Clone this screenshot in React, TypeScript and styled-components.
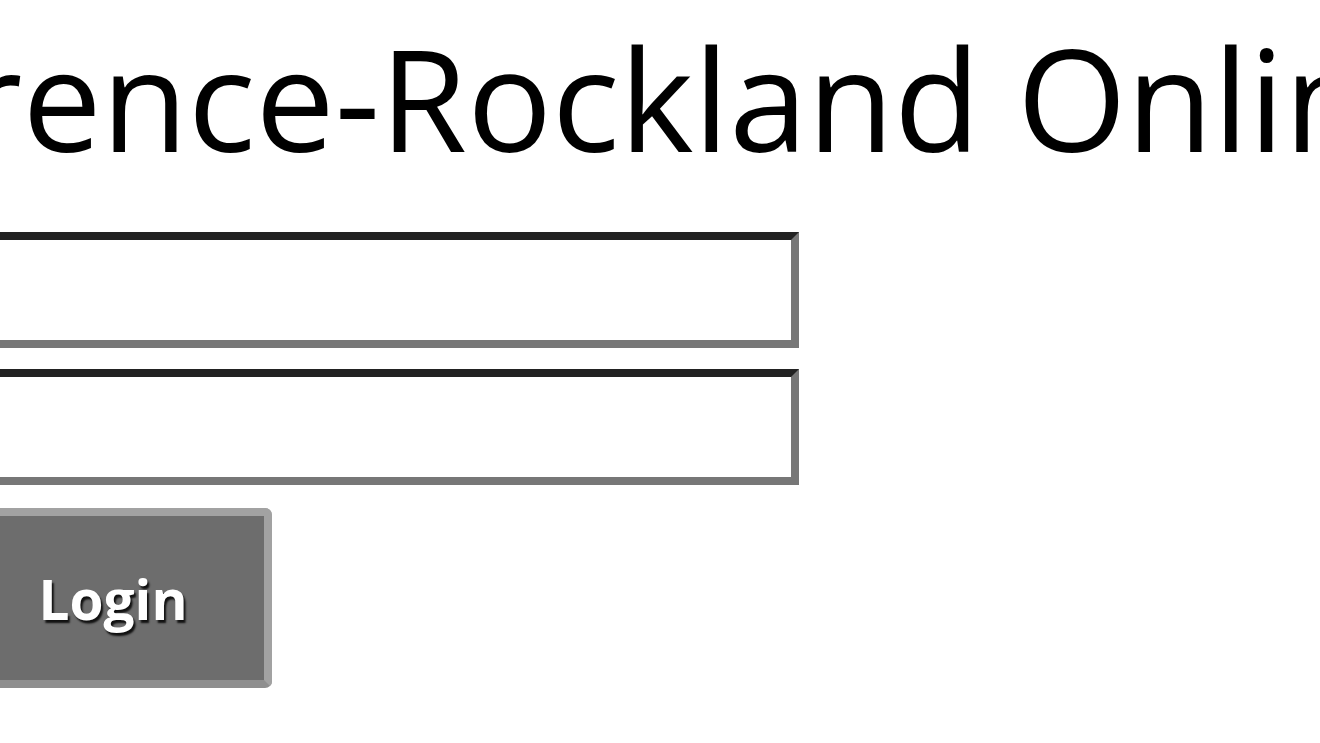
import styled, { createGlobalStyle } from "styled-components";

const GlobalStyle = createGlobalStyle`
  html, body {
    margin: 0;
    padding: 0;
    background: #ffffff;
    overflow: hidden;
  }
  body {
    font-family: "Open Sans", "Liberation Sans", sans-serif;
  }
`;

const Page = styled.div`
  width: 1320px;
  height: 743px;
  overflow: hidden;
`;

const Frame = styled.div`
  display: flex;
  flex-direction: column;
  align-items: flex-start;
  margin-left: -46px;
  padding-top: 27px;
`;

const Title = styled.h1`
  margin: 0 0 64px -192px;
  font-family: "Open Sans", "Liberation Sans", sans-serif;
  font-weight: 400;
  font-size: 141px;
  line-height: 1;
  color: #000000;
  white-space: nowrap;
`;

const LoginForm = styled.form`
  display: flex;
  flex-direction: column;
  align-items: flex-start;
  gap: 21px;
`;

const Field = styled.input`
  box-sizing: border-box;
  width: 845px;
  height: 116px;
  margin: 0;
  padding: 0 20px;
  border-style: solid;
  border-width: 8px;
  border-color: #222222 #777777 #777777 #222222;
  background: #ffffff;
  font-family: "Open Sans", "Liberation Sans", sans-serif;
  font-size: 50px;
  outline: none;
`;

const LoginButton = styled.button`
  box-sizing: border-box;
  width: 318px;
  height: 180px;
  margin-top: 2px;
  display: flex;
  align-items: center;
  justify-content: center;
  border: 8px solid #a2a2a2;
  border-bottom-color: #8e8e8e;
  border-radius: 7px;
  background: #6d6d6d;
  color: #ffffff;
  font-family: "Open Sans", "Liberation Sans", sans-serif;
  font-weight: 700;
  font-size: 55px;
  text-shadow: 2px 3px 2px rgba(0, 0, 0, 0.85);
  cursor: pointer;
`;

const App = () => {
  return (
    <Page>
      <GlobalStyle />
      <Frame>
        <Title>Clarence-Rockland Online</Title>
        <LoginForm onSubmit={(e) => e.preventDefault()}>
          <Field type="text" aria-label="Username" />
          <Field type="password" aria-label="Password" />
          <LoginButton type="submit">Login</LoginButton>
        </LoginForm>
      </Frame>
    </Page>
  );
};

export default App;
